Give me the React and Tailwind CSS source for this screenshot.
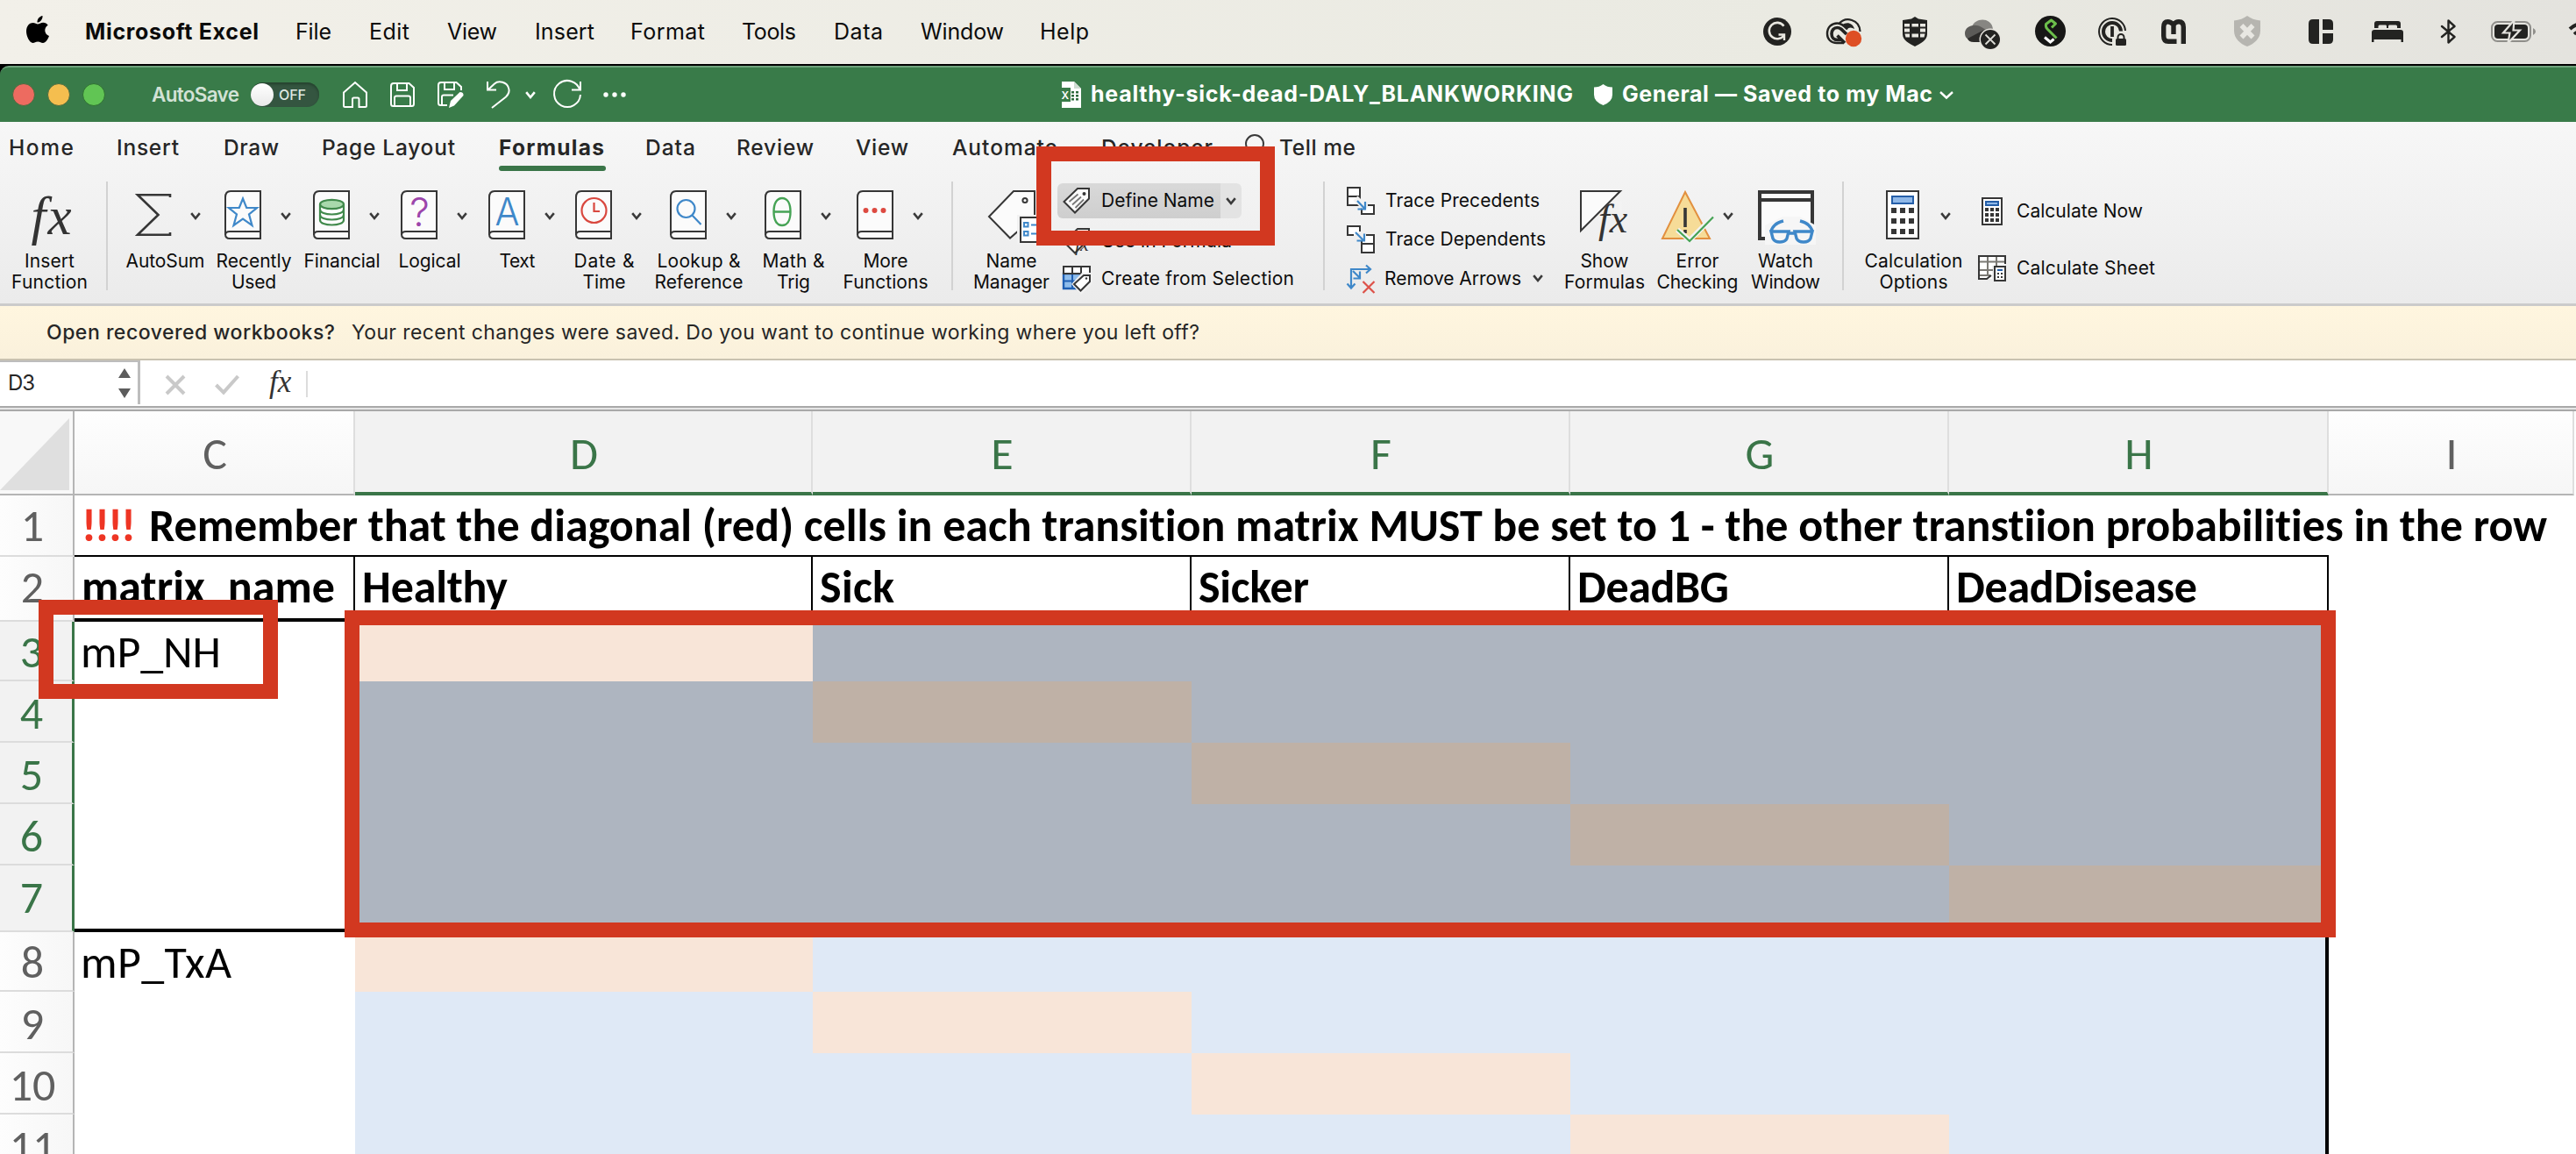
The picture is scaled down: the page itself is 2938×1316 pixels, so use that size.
import { useLayoutEffect, useRef } from "react";

const UI = "font-['Inter',sans-serif]";
const SHEET = "font-['Carlito','Lato',sans-serif]";

/* One line of text whose tracking is set so that it fills `w` pixels. */
function Label({ w, className = "", children }) {
  const ref = useRef(null);
  useLayoutEffect(() => {
    const el = ref.current;
    el.style.letterSpacing = "0px";
    const natural = el.getBoundingClientRect().width;
    const count = el.textContent.length;
    if (count > 1) el.style.letterSpacing = `${(w - natural) / (count - 1)}px`;
  }, [w, children]);
  return (
    <span className={`block shrink-0 ${className}`} style={{ width: w }}>
      <span ref={ref} className="inline-block whitespace-nowrap">
        {children}
      </span>
    </span>
  );
}

function Svg({ w, h, className = "", children }) {
  return (
    <svg
      width={w}
      height={h}
      viewBox={`0 0 ${w} ${h}`}
      fill="none"
      className={`block shrink-0 overflow-visible ${className}`}
    >
      {children}
    </svg>
  );
}

function Chevron({ className = "", color = "#3a3a3a" }) {
  return (
    <Svg w={12} h={9} className={className}>
      <path d="M1.2 1.2 6 7 10.8 1.2" stroke={color} strokeWidth="2.6" />
    </Svg>
  );
}

/* ---------- menu bar ---------- */

const menus = [
  ["File", 41, "ml-[42px]"],
  ["Edit", 46, "ml-[43px]"],
  ["View", 57, "ml-[43px]"],
  ["Insert", 68, "ml-[43px]"],
  ["Format", 85, "ml-[41px]"],
  ["Tools", 62, "ml-[42px]"],
  ["Data", 56, "ml-[43px]"],
  ["Window", 95, "ml-[43px]"],
  ["Help", 56, "ml-[41px]"],
];

function StatusIcons() {
  const k = "#232321";
  return (
    <>
      <Svg w={32} h={32} className="ml-[769px] mt-[20px]">
        <circle cx="16" cy="16" r="16" fill={k} />
        <path d="M23.500 9.700A9.200 9.200 0 1 0 24 19.600" stroke="#e9e8e1" strokeWidth="2.600" />
        <path d="M17.500 19.500H24V26" stroke="#e9e8e1" strokeWidth="2.400" />
      </Svg>
      <Svg w={40} h={32} className="ml-[40px] mt-[21px]">
        <path d="M14 6.500C22-3 38 1 38.500 15" stroke={k} strokeWidth="2.200" />
        <path d="M20 28H12C5 28 1 23.500 1 17.500 1 10 6 5.500 12.500 5.500 17 5.500 20 8 24 12.500" stroke={k} strokeWidth="2.400" />
        <path d="M21 28 12.500 19.500M17.500 24.500H12.500C8.500 24.500 6 21.500 6 17.500 6 13.500 8.500 10.500 12.500 10.500 15.500 10.500 17 12 23 18" stroke={k} strokeWidth="3.600" />
        <path d="M18 7.500C23 3.500 30 5 32 12 29 10 26 10 23.500 12Z" fill={k} />
        <circle cx="31" cy="23" r="9.200" fill="#de4f24" />
      </Svg>
      <Svg w={28} h={34} className="ml-[47px] mt-[19px]">
        <path d="M14 0 18 2.500 28 4V20C28 27 20 31 14 34 8 31 0 27 0 20V4L10 2.500Z" fill={k} />
        <g fill="#e9e8e1">
          <path d="M2 8H8V11.500H2ZM10.500 8H18V11.500H10.500ZM20 8H26V11.500H20ZM2 13.500H8V17.500H2ZM20 13.500H26V17.500H20ZM2.500 19.500H8V23.500H3.500ZM10.500 19.500H18V23.500H10.500ZM20 19.500H25.500L24.500 23.500H20Z" />
        </g>
      </Svg>
      <Svg w={40} h={34} className="ml-[43px] mt-[22px]">
        <path d="M8 9C11-2 30-3 32 11L22 17Z" fill="#878682" />
        <path d="M0 16C0 8 11 4 19 9L24 12 4 23C1 21 0 19 0 16Z" fill="#5c5b58" />
        <path d="M3 22 22 12 30 15V26H10C6 26 4 24.500 3 22Z" fill="#2c2b29" />
        <circle cx="29" cy="23" r="12.500" fill="#e8e6e0" />
        <circle cx="29" cy="23" r="11" fill={k} />
        <path d="M23.500 17.500 34.500 28.500M34.500 17.500 23.500 28.500" stroke="#dddcd7" strokeWidth="1.800" />
      </Svg>
      <Svg w={35} h={35} className="ml-[40px] mt-[18px]">
        <circle cx="17.500" cy="17.500" r="17.500" fill="#171716" />
        <path d="M19 13.500 23.500 9 18.500 5 12.500 9.500C12 12 12.500 13.500 14 15L24.500 25.500" stroke="#6cbf4b" strokeWidth="3" strokeLinejoin="round" />
        <path d="M11 24.500 17.500 30 21.500 26.500" stroke="#fff" strokeWidth="3" />
      </Svg>
      <Svg w={32} h={32} className="ml-[37px] mt-[20px]">
        <path d="M16 31A15 15 0 1 1 31 15" stroke={k} strokeWidth="2" />
        <path d="M16 26A10 10 0 1 1 26 15.500" stroke={k} strokeWidth="4" />
        <path d="M16 10V22" stroke={k} strokeWidth="3.800" />
        <rect x="20" y="24" width="12" height="8" rx="1.500" fill={k} />
        <path d="M22.500 25V22.500A3.500 3.500 0 0 1 29.500 22.500V25" stroke={k} strokeWidth="2" />
      </Svg>
      <Svg w={28} h={28} className="ml-[40px] mt-[22px]">
        <path d="M17.500 25.300H8Q2.700 25.300 2.700 19V9Q2.700 2.700 7.500 2.700 10.500 2.700 14 6 16.500 2.700 20 2.700 25.300 2.700 25.300 9V28M14 5V17" stroke={k} strokeWidth="5.400" />
        <path d="M8 17V9M19.500 17V9" stroke={k} strokeWidth="0" />
      </Svg>
      <Svg w={30} h={35} className="ml-[55px] mt-[18px]">
        <path d="M15 0C19 3 24 5 30 5.500V17C30 26 23 32 15 35 7 32 0 26 0 17V5.500C6 5 11 3 15 0Z" fill="#b6b5b0" />
        <path d="M8.500 11 21.500 24.500M21.500 11 8.500 24.500" stroke="#e8e7e2" strokeWidth="5.500" />
      </Svg>
      <Svg w={28} h={28} className="ml-[55px] mt-[22px]">
        <path d="M5 0H12V28H5Q0 28 0 23V5Q0 0 5 0ZM16 0H23Q28 0 28 5V12H16ZM16 16H28V23Q28 28 23 28H16Z" fill={k} />
      </Svg>
      <Svg w={36} h={24} className="ml-[44px] mt-[24px]">
        <path d="M3 8V3Q3 0 6 0H30Q33 0 33 3V8H29V6Q29 4.500 27.500 4.500H20Q19 4.500 19 6V8H17V6Q17 4.500 16 4.500H9Q7.500 4.500 7.500 6V8ZM0 24V13Q0 10 3 10H33Q36 10 36 13V24H33.500V21H2.500V24Z" fill={k} />
      </Svg>
      <Svg w={17} h={28} className="ml-[43px] mt-[22px]">
        <path d="M1 8 15.500 20 8.500 26.500V1.500L15.500 8 1 20" stroke={k} strokeWidth="2.400" strokeLinejoin="round" strokeLinecap="round" />
      </Svg>
      <Svg w={51} h={24} className="ml-[40px] mt-[24px]">
        <rect x="1" y="1" width="44" height="22" rx="6.500" stroke="#8f8e8a" strokeWidth="2" />
        <path d="M48 8Q51 9.500 51 12 51 14.500 48 16Z" fill="#8f8e8a" />
        <rect x="4" y="4" width="38" height="16" rx="4" fill={k} />
        <path d="M26.500-1 14 13.500H21.500L19.500 25 33 10.500H25.500Z" fill={k} stroke="#e5e4df" strokeWidth="2.200" />
      </Svg>
      <Svg w={8} h={24} className="ml-[38px] mt-[26px]">
        <path d="M1 7Q6 2 14 1" stroke={k} strokeWidth="4" />
        <path d="M6 13Q9 10 14 9" stroke={k} strokeWidth="3.500" />
      </Svg>
    </>
  );
}

function MenuBar() {
  return (
    <div className={`flex h-[73px] shrink-0 items-start overflow-hidden bg-gradient-to-r from-[#f2f0e9] via-[#eaeae2] via-70% to-[#e4e3de] ${UI} text-[25px] leading-[72px] text-[#0b0b0b]`}>
      <Svg w={26} h={31} className="ml-[30px] mt-[18px]">
        <path d="M18.500 0C19 4 15.500 7.800 12.500 7.600 12.200 3.800 15 .6 18.500 0ZM13 9.500C14.500 9.500 16.500 7.700 19.300 7.700 21.500 7.800 23.500 8.900 24.700 10.800 19.500 14 20.500 21 26 23 24.500 27 22 31 19 31 16.500 31 16 29.600 13.200 29.600 10.400 29.600 9.700 31 7.300 31 4 31-.2 23.500 0 17.300.2 11 4 7.900 7.600 7.900 9.900 7.900 11.700 9.500 13 9.500Z" fill="#000" />
      </Svg>
      <Label w={198} className="ml-[41px] font-bold">Microsoft Excel</Label>
      {menus.map(([name, w, gap]) => (
        <Label key={name} w={w} className={gap}>{name}</Label>
      ))}
      <StatusIcons />
    </div>
  );
}

/* ---------- title bar ---------- */

function TitleBar() {
  return (
    <div className="h-[66px] shrink-0 bg-black pt-[2px]">
      <div className={`flex h-[64px] items-center rounded-tl-[10px] border-t-2 border-[#6fa27c] bg-[#397b49] ${UI} text-white`}>
        <span className="ml-[14px] size-[26px] shrink-0 rounded-full border border-[#4c6a3f] bg-[#ed6b60]" />
        <span className="ml-[14px] size-[26px] shrink-0 rounded-full border border-[#4c6a3f] bg-[#f5be4f]" />
        <span className="ml-[14px] size-[26px] shrink-0 rounded-full border border-[#2f7032] bg-[#61c554]" />
        <Label w={100} className="ml-[53px] text-[22.500px] font-semibold text-[#d3e2d6]">AutoSave</Label>
        <div className="ml-[13px] flex h-[28px] w-[78px] shrink-0 items-center rounded-full bg-[#345540] shadow-[inset_0_2px_3px_#24422d]">
          <span className="h-[26px] w-[26px] rounded-full bg-gradient-to-b from-white to-[#e9e9e9]" />
          <Label w={31} className="ml-[6px] text-[16px] font-medium text-[#dfe8e1]">OFF</Label>
        </div>
        <Svg w={28} h={30} className="ml-[27px]">
          <path d="M1 12.500 14 1 27 12.500V27.500Q27 29 25.500 29H18.500V20Q18.500 18.500 17 18.500H12.500Q11 18.500 11 20V29H2.500Q1 29 1 27.500Z" stroke="#fff" strokeWidth="2" />
        </Svg>
        <Svg w={28} h={28} className="ml-[26px]">
          <path d="M4 1H21.500L27 6V24.500Q27 27 24.500 27H3.500Q1 27 1 24.500V4Q1 1 4 1ZM8 1V9H19V1M5 27V17.500Q5 15.500 7 15.500H21Q23 15.500 23 17.500V27" stroke="#fff" strokeWidth="2" />
        </Svg>
        <Svg w={30} h={30} className="ml-[26px]">
          <path d="M11 27H3.500Q1 27 1 24.500V4Q1 1 4 1H21.500L27 6V10M8 1V9H19V1M5 27V17.500Q5 15.500 7 15.500H18" stroke="#fff" strokeWidth="2" />
          <path d="M13 30 15 22 25.500 12Q30 12 29.500 16L19 27.500Z" fill="#fff" />
        </Svg>
        <Svg w={27} h={32} className="ml-[26px]">
          <path d="M1 1V10.500H11M2 10 9 3.500C14-1 23 2 25 8 26.500 12 25 15.500 22 18.500L6 31" stroke="#fff" strokeWidth="2" />
        </Svg>
        <Chevron color="#fff" className="ml-[17px]" />
        <Svg w={32} h={32} className="ml-[20px]">
          <path d="M30.500 11A15 15 0 1 0 31 16M31 1V10.500H21" stroke="#fff" strokeWidth="2" />
        </Svg>
        <Svg w={26} h={6} className="ml-[25px]">
          <path d="M3 .3A2.700 2.700 0 1 1 3 5.700 2.700 2.700 0 1 1 3 .3M13 .3A2.700 2.700 0 1 1 13 5.700 2.700 2.700 0 1 1 13 .3M23 .3A2.700 2.700 0 1 1 23 5.700 2.700 2.700 0 1 1 23 .3" fill="#fff" />
        </Svg>
        <Svg w={27} h={30} className="ml-[494px]">
          <path d="M3 0H17L25 8V30H3Z" fill="#fff" />
          <path d="M17 0V8H25Z" fill="#cfdcd2" />
          <path d="M14 11H17V13.500H14ZM19 11H22V13.500H19ZM14 15H17V17.500H14ZM19 15H22V17.500H19ZM14 19H17V21.500H14ZM19 19H22V21.500H19Z" fill="#2c6a3c" />
          <rect x="0" y="7" width="13" height="16" fill="#397b49" />
          <text x="2.500" y="19.500" fontSize="12" fontWeight="600" fill="#fff">X</text>
        </Svg>
        <Label w={550} className="ml-[9px] text-[25px] font-bold">healthy-sick-dead-DALY_BLANKWORKING</Label>
        <Svg w={21} h={24} className="ml-[24px]">
          <path d="M10.500 0Q15 3.500 21 3.500V12Q21 20 10.500 24 0 20 0 12V3.500Q6 3.500 10.500 0Z" fill="#fff" />
        </Svg>
        <Label w={354} className="ml-[11px] text-[25px] font-bold">General — Saved to my Mac</Label>
        <Svg w={16} h={9} className="ml-[8px]">
          <path d="M1 1 8 7.500 15 1" stroke="#fff" strokeWidth="2.400" />
        </Svg>
      </div>
    </div>
  );
}

/* ---------- ribbon ---------- */

const tabs = [
  ["Home", 74, "ml-[10px]"],
  ["Insert", 71, "ml-[49px]"],
  ["Draw", 63, "ml-[51px]"],
  ["Page Layout", 152, "ml-[49px]"],
  ["Formulas", 120, "ml-[50px]"],
  ["Data", 57, "ml-[47px]"],
  ["Review", 88, "ml-[47px]"],
  ["View", 60, "ml-[48px]"],
  ["Automate", 120, "ml-[50px]"],
  ["Developer", 127, "ml-[50px]"],
];

function Tabs() {
  return (
    <div className="flex h-[62px] text-[24.500px] font-medium leading-[59px] text-[#262626]">
      {tabs.map(([name, w, gap]) =>
        name === "Formulas" ? (
          <div key={name} className={`${gap} flex w-[120px] shrink-0 flex-col`}>
            <Label w={w} className="h-[50px] font-bold">{name}</Label>
            <span className="h-[6px] w-[122px] rounded-[3px] bg-[#3a7548]" />
          </div>
        ) : (
          <Label key={name} w={w} className={gap}>{name}</Label>
        )
      )}
      <Svg w={22} h={32} className="ml-[37px] mt-[14px]">
        <path d="M7 25V21C3 18 1 15 1 11A10 10 0 0 1 21 11C21 15 19 18 15 21V25ZM8 29H14" stroke="#3a3a3a" strokeWidth="2" />
      </Svg>
      <Label w={87} className="ml-[17px]">Tell me</Label>
    </div>
  );
}

function Book({ children }) {
  return (
    <Svg w={42} h={56}>
      <path d="M41 1H7Q1 1 1 8V50Q1 55 6 55H41Z" fill="#fbfbfb" stroke="#363636" strokeWidth="2" />
      <path d="M41 47H6Q1 47 1 51" stroke="#363636" strokeWidth="2" />
      {children}
    </Svg>
  );
}

function Fx({ className }) {
  return <span className={`block font-['Liberation_Serif',serif] italic leading-none text-[#333] ${className}`}>fx</span>;
}

function Tool({ className, iconClass = "w-[67px]", icon, chevron, chevronClass = "ml-[22px]", lines }) {
  return (
    <div className={`flex shrink-0 flex-col items-center pt-[16px] ${className}`}>
      <div className={`flex h-[57px] items-start ${iconClass}`}>
        {icon}
        {chevron && <Chevron className={`mt-[25px] ${chevronClass}`} />}
      </div>
      <div className="mt-[12px] flex flex-col items-center text-[21px] leading-[24px]">
        {lines.map(([text, w]) => (
          <Label key={text} w={w}>{text}</Label>
        ))}
      </div>
    </div>
  );
}

function Rule({ className }) {
  return <div className={`mt-[6px] h-[124px] w-[2px] shrink-0 bg-[#d2d2d2] ${className}`} />;
}

const blue = "#3f88c9";

const books = [
  {
    className: "w-[99px]",
    lines: [["Recently", 86], ["Used", 51]],
    art: <path d="M21 9.500 25.200 20H37L28 27.300 31.500 40 21 32.500 10.500 40 14 27.300 5 20H16.800Z" stroke={blue} strokeWidth="2.200" />,
  },
  {
    className: "w-[102px]",
    lines: [["Financial", 87]],
    art: (
      <g stroke="#418a4c" strokeWidth="2.200">
        <path d="M8 16V34C8 37.500 14 39.500 21.500 39.500 29 39.500 35 37.500 35 34V16" fill="#fff" />
        <path d="M8 22C8 25.500 14 27.500 21.500 27.500 29 27.500 35 25.500 35 22M8 28C8 31.500 14 33.500 21.500 33.500 29 33.500 35 31.500 35 28" />
        <ellipse cx="21.500" cy="16" rx="13.500" ry="5.200" fill="#a9d9ac" />
      </g>
    ),
  },
  {
    className: "w-[98px]",
    lines: [["Logical", 71]],
    art: <text x="21.500" y="41" textAnchor="middle" fontSize="45" fontWeight="300" fill="#9c45ab">?</text>,
  },
  {
    className: "w-[102px]",
    lines: [["Text", 41]],
    art: <text x="7.500" y="40" fontSize="43" fontWeight="300" textLength="28" lengthAdjust="spacingAndGlyphs" fill={blue}>A</text>,
  },
  {
    className: "w-[96px]",
    lines: [["Date &", 69], ["Time", 49]],
    art: <path d="M21.500 9A14 14 0 1 1 21.500 37 14 14 0 1 1 21.500 9M21.500 14V24H28" stroke="#d9483f" strokeWidth="2.200" />,
  },
  {
    className: "w-[120px]",
    lines: [["Lookup &", 95], ["Reference", 101]],
    art: <path d="M18.500 11A10 10 0 1 1 18.500 31 10 10 0 1 1 18.500 11M25.500 28.500 35.500 39" stroke={blue} strokeWidth="2.200" />,
  },
  {
    className: "w-[96px]",
    lines: [["Math &", 71], ["Trig", 38]],
    art: <path d="M20 9C26 9 29.500 15 29.500 24.500 29.500 34 26 40 20 40 14 40 10.500 34 10.500 24.500 10.500 15 14 9 20 9ZM11 24.500H29" stroke="#46a355" strokeWidth="2.400" />,
  },
  {
    className: "w-[114px]",
    lines: [["More", 51], ["Functions", 97]],
    art: <path d="M10.500 20A3 3 0 1 1 10.500 26 3 3 0 1 1 10.500 20M20.500 20A3 3 0 1 1 20.500 26 3 3 0 1 1 20.500 20M30.500 20A3 3 0 1 1 30.500 26 3 3 0 1 1 30.500 20" fill="#dd4a41" />,
  },
];

function TagIcon({ lines }) {
  return (
    <Svg w={32} h={32}>
      <path d="M17 2H30V13.500L14 29.500 1.500 17Z" fill="#fbfbfb" stroke="#363636" strokeWidth="2" />
      <circle cx="24.500" cy="8" r="2" fill="#363636" />
      {lines && <path d="M7.500 17 17.500 8.500M11 20.500 21 11.500M14.500 24 24 14.500" stroke="#777" strokeWidth="1.800" />}
    </Svg>
  );
}

function NameGroup() {
  return (
    <>
      <Tool
        className="ml-[20px] w-[93px]"
        iconClass="w-[54px]"
        lines={[["Name", 58], ["Manager", 87]]}
        icon={
          <Svg w={58} h={60}>
            <path d="M29 1H53V30L25 54.500 1 30Z" fill="#fbfbfb" stroke="#363636" strokeWidth="2" />
            <circle cx="42" cy="11.500" r="2.600" stroke="#363636" strokeWidth="2" />
            <path d="M33 28H60V62H33Z" fill="#f1f1f1" />
            <rect x="37" y="31" width="28" height="28" fill="#fff" stroke="#363636" strokeWidth="2" />
            <path d="M41 37H45.500V41.500H41ZM41 47H45.500V51.500H41ZM49 39.500H60M49 49.500H60" stroke={blue} strokeWidth="2" />
          </Svg>
        }
      />
      <div className="ml-[6px] flex w-[272px] shrink-0 flex-col pt-[6px] text-[21px] leading-[44px]">
        <div className="flex h-[44px] items-center">
          <div className="flex h-[40px] w-[186px] items-center rounded-l-[6px] bg-gradient-to-b from-[#d9d9d9] to-[#cecece] pl-[6px]">
            <TagIcon lines />
            <Label w={129} className="ml-[12px]">Define Name</Label>
          </div>
          <div className="flex h-[40px] w-[24px] items-center rounded-r-[6px] bg-[#e3e3e3] pl-[6px]">
            <Chevron />
          </div>
        </div>
        <div className="flex h-[44px] items-center pl-[6px] pt-[3px]">
          <div className="relative">
            <TagIcon />
            <Fx className="absolute left-[14px] top-[9px] text-[22px]" />
          </div>
          <Label w={149} className="ml-[12px]">Use in Formula</Label>
        </div>
        <div className="flex h-[45px] items-center pl-[6px]">
          <Svg w={32} h={30}>
            <path d="M1 9H21V26H1Z" fill="#8fbdec" stroke="#1f5fb3" strokeWidth="2.400" />
            <path d="M11 9V26M1 17.500H21" stroke="#1f5fb3" strokeWidth="2" />
            <path d="M1 1H31V9H1ZM11 1V9M21 1V9" fill="#fff" stroke="#363636" strokeWidth="2" />
            <path d="M10 21 22 8H34V20L21 33Z" fill="#f1f1f1" />
            <path d="M24 11H31V18L20.500 28.500 13 21Z" fill="#fff" stroke="#363636" strokeWidth="2" />
            <circle cx="27" cy="14.500" r="1.200" fill="#363636" />
          </Svg>
          <Label w={220} className="ml-[12px]">Create from Selection</Label>
        </div>
      </div>
    </>
  );
}

function AuditGroup() {
  return (
    <>
      <div className="ml-[25px] flex w-[226px] shrink-0 flex-col pt-[6px] text-[21px] leading-[44px]">
        <div className="flex h-[44px] items-center">
          <Svg w={32} h={32}>
            <path d="M1 1H15V11H1ZM1 11V21H15V11M17 22V31H31V21H24" fill="#fff" stroke="#363636" strokeWidth="2" />
            <path d="M10 13 22 25" stroke="#f2f2f2" strokeWidth="7" />
            <path d="M12 16 20.500 25M21 17V25.500H12.500" stroke={blue} strokeWidth="2.200" />
          </Svg>
          <Label w={176} className="ml-[12px]">Trace Precedents</Label>
        </div>
        <div className="flex h-[44px] items-center">
          <Svg w={32} h={32}>
            <path d="M8 11H1V1H15V7M22 11H31V21H17V17M17 21V31H31V21" fill="#fff" stroke="#363636" strokeWidth="2" />
            <path d="M10 8 19 17M20 9.500V17.500H11.500" stroke={blue} strokeWidth="2.200" />
          </Svg>
          <Label w={183} className="ml-[12px]">Trace Dependents</Label>
        </div>
        <div className="flex h-[45px] items-center">
          <Svg w={32} h={32}>
            <path d="M5 26V5H26M22 .5 27 5 22 9.500M.5 21.500 5 26.500 9.500 21.500M7 7 14.500 14.500M15 7.500V15.500H7.500" stroke={blue} strokeWidth="2.200" />
            <path d="M18.500 19 31.500 32M31.500 19 18.500 32" stroke="#dd5148" strokeWidth="2.200" />
          </Svg>
          <Label w={156} className="ml-[11px]">Remove Arrows</Label>
          <Chevron className="ml-[13px]" />
        </div>
      </div>
      <Tool
        className="ml-[20px] w-[96px]"
        iconClass="w-[56px] relative"
        lines={[["Show", 55], ["Formulas", 92]]}
        icon={
          <>
            <Svg w={56} h={60}>
              <path d="M1 1H46L1 46Z" fill="#fbfbfb" stroke="#363636" strokeWidth="2" />
              <path d="M22 35 30 22 40 14 46 14 46 26" stroke="#f3f3f3" strokeWidth="3" />
            </Svg>
            <Fx className="absolute left-[21px] top-[10px] text-[46px]" />
          </>
        }
      />
      <Tool
        className="w-[116px]"
        iconClass="w-[82px]"
        chevron
        chevronClass="ml-[10px]"
        lines={[["Error", 49], ["Checking", 93]]}
        icon={
          <Svg w={60} h={60}>
            <path d="M27 2 55 55H1Z" fill="#f6dc98" stroke="#e2903f" strokeWidth="2" />
            <path d="M27 20V42M27 45V49" stroke="#363636" strokeWidth="3.600" />
            <path d="M18 45 32 57 58 31" stroke="#f3f3f3" strokeWidth="6" />
            <path d="M18 45 32 58 59 30.500" stroke="#46a355" strokeWidth="2.200" />
          </Svg>
        }
      />
      <Tool
        className="w-[85px]"
        iconClass="w-[64px]"
        lines={[["Watch", 63], ["Window", 79]]}
        icon={
          <Svg w={64} h={60}>
            <path d="M2 2H62V55H2Z" fill="#fbfbfb" stroke="#363636" strokeWidth="4" />
            <path d="M2 11H62" stroke="#363636" strokeWidth="4" />
            <path d="M8 57V40L28 30H48L66 40V62H8Z" fill="#f6f6f6" />
            <path d="M15 47H35L33 55Q31 59 25 59 19 59 17 55ZM42 47H62L60 55Q58 59 52 59 46 59 44 55ZM35 49H42M15 47Q17 38 29 35M62 47Q60 38 48 35" stroke={blue} strokeWidth="3.400" />
          </Svg>
        }
      />
    </>
  );
}

function CalcGroup() {
  return (
    <>
      <Tool
        className="ml-[22px] w-[115px]"
        iconClass="w-[63px]"
        chevron
        chevronClass="ml-[24px]"
        lines={[["Calculation", 112], ["Options", 78]]}
        icon={
          <Svg w={38} h={56}>
            <rect x="1" y="1" width="36" height="54" fill="#fff" stroke="#363636" strokeWidth="2" />
            <rect x="7" y="7" width="24" height="8" fill="#8fb8e8" stroke="#245ea8" strokeWidth="2" />
            <path d="M6 20H12V26H6ZM16 20H22V26H16ZM26 20H32V26H26ZM6 32H12V38H6ZM16 32H22V38H16ZM26 32H32V38H26ZM6 44H12V50H6ZM16 44H22V50H16ZM26 44H32V50H26Z" fill="#363636" />
          </Svg>
        }
      />
      <div className="ml-[15px] flex shrink-0 flex-col pt-[8px] text-[21px] leading-[64px]">
        <div className="flex h-[64px] items-center">
          <Svg w={24} h={32} className="ml-[5px]">
            <rect x="1" y="1" width="22" height="30" fill="#fff" stroke="#363636" strokeWidth="2" />
            <rect x="5" y="5" width="14" height="4" fill="#8fb8e8" stroke="#245ea8" strokeWidth="2" />
            <path d="M4 12H8V16H4ZM10 12H14V16H10ZM16 12H20V16H16ZM4 18H8V22H4ZM10 18H14V22H10ZM16 18H20V22H16ZM4 24H8V28H4ZM10 24H14V28H10ZM16 24H20V28H16Z" fill="#363636" />
          </Svg>
          <Label w={144} className="ml-[16px]">Calculate Now</Label>
        </div>
        <div className="flex h-[66px] items-center">
          <Svg w={32} h={30} className="ml-px">
            <path d="M1 1H31V12H16V27H1Z" fill="#fff" />
            <path d="M1 7.500H31M1 17H17M11 1V23M21 1V12M1 23H14" stroke="#7b7974" strokeWidth="2" />
            <path d="M31 10V1H1V27H10L15 23" stroke="#363636" strokeWidth="2" />
            <rect x="19" y="13" width="12" height="16" fill="#fff" stroke="#363636" strokeWidth="2" />
            <path d="M22 17H28" stroke="#245ea8" strokeWidth="2" />
            <path d="M22 20H24V22H22ZM26 20H28V22H26ZM22 24H24V26H22ZM26 24H28V26H26Z" fill="#363636" />
          </Svg>
          <Label w={158} className="ml-[12px]">Calculate Sheet</Label>
        </div>
      </div>
    </>
  );
}

function Ribbon() {
  return (
    <div className={`flex h-[210px] shrink-0 flex-col border-b-[3px] border-[#cbcbcb] bg-gradient-to-b from-[#f7f7f7] to-[#ebebeb] ${UI} text-[#0d0d0d]`}>
      <Tabs />
      <div className="flex h-[145px] items-start">
        <Tool className="w-[113px]" iconClass="w-[42px]" lines={[["Insert", 57], ["Function", 87]]} icon={<Fx className="-mt-[1px] text-[61px] tracking-[2px]" />} />
        <Rule className="ml-[8px] mr-[14px]" />
        <Tool
          className="w-[103px]"
          iconClass="w-[69px]"
          chevron
          lines={[["AutoSum", 90]]}
          icon={
            <Svg w={41} h={56}>
              <path d="M40 8V5.300H3L26.500 28 3 50.700H40V48" stroke="#363636" strokeWidth="2.600" />
            </Svg>
          }
        />
        {books.map((b) => (
          <Tool key={b.lines[0][0]} className={b.className} chevron lines={b.lines} icon={<Book>{b.art}</Book>} />
        ))}
        <Rule className="ml-[18px]" />
        <NameGroup />
        <Rule className="ml-[31px]" />
        <AuditGroup />
        <Rule className="ml-[22px]" />
        <CalcGroup />
      </div>
    </div>
  );
}

/* ---------- message and formula bars ---------- */

function MessageBar() {
  return (
    <div className={`flex h-[62px] shrink-0 items-center border-b-2 border-[#c9c2b0] bg-gradient-to-b from-[#fff6df] to-[#faf1dc] ${UI} text-[23px] text-[#262626]`}>
      <Label w={329} className="ml-[53px] font-medium">Open recovered workbooks?</Label>
      <Label w={967} className="ml-[19px]">
        Your recent changes were saved. Do you want to continue working where you left off?
      </Label>
    </div>
  );
}

function FormulaBar() {
  return (
    <div className="flex h-[58px] shrink-0 flex-col bg-white">
      <div className="flex h-[52px] items-start">
        <div className={`flex h-[50px] w-[160px] shrink-0 items-center border-r-[3px] border-t-2 border-[#bdbdbd] ${UI} text-[24px] text-[#262626]`}>
          <Label w={31} className="ml-[9px]">D3</Label>
          <Svg w={14} h={34} className="ml-[95px]">
            <path d="M7 0 14 11H0ZM7 34 0 23H14Z" fill="#5c5c5c" />
          </Svg>
        </div>
        <Svg w={24} h={22} className="ml-[28px] mt-[17px]">
          <path d="M2 1 22 21M22 1 2 21" stroke="#c9c9c9" strokeWidth="4" />
        </Svg>
        <Svg w={28} h={22} className="ml-[33px] mt-[17px]">
          <path d="M1.500 11 10 19.500 26.500 1" stroke="#c9c9c9" strokeWidth="4" />
        </Svg>
        <Fx className="ml-[34px] mt-[7px] w-[31px] text-[35px]" />
        <span className="ml-[11px] mt-[12px] h-[30px] w-[2px] bg-[#dcdcdc]" />
      </div>
      <div className="h-[6px] border-y-2 border-[#a9a9a9] bg-[#e6e6e6]" />
    </div>
  );
}

/* ---------- worksheet ---------- */

const GRID = "grid shrink-0 grid-rows-[100%] grid-cols-[85px_320px_522px_432px_432px_432px_433px_280px]";

const columns = [
  ["C", false],
  ["D", true],
  ["E", true],
  ["F", true],
  ["G", true],
  ["H", true],
  ["I", false],
];

function ColumnHeader() {
  return (
    <div className={`${GRID} h-[96px] text-[52px] leading-[97px]`}>
      <div className="flex items-end justify-end border-b-2 border-r-2 border-[#b5b5b5] bg-[#f8f8f8] pb-[4px] pr-[4px]">
        <Svg w={79} h={82}>
          <path d="M79 0V82H0Z" fill="#dfdfdf" />
        </Svg>
      </div>
      {columns.map(([name, on]) =>
        on ? (
          <div key={name} className="overflow-hidden border-b-4 border-r-2 border-b-[#3a7548] border-r-[#dedede] bg-[#f2f2f2] pl-[2px] text-center text-[#3a7548]">
            {name}
          </div>
        ) : (
          <div key={name} className="overflow-hidden border-b-2 border-r-2 border-b-[#b5b5b5] border-r-[#dedede] bg-gradient-to-b from-[#fefefe] to-[#f6f6f6] pl-[2px] text-center text-[#606060]">
            {name}
          </div>
        )
      )}
    </div>
  );
}

function RowHead({ n, on, className = "" }) {
  return on ? (
    <div className={`border-b-2 border-r-[3px] border-b-[#dcdcdc] border-r-[#3a7548] bg-[#f2f2f2] pr-[10px] text-center text-[#3a7548] ${className}`}>{n}</div>
  ) : (
    <div className={`border-b-2 border-r-2 border-b-[#dcdcdc] border-r-[#b5b5b5] bg-gradient-to-r from-[#fdfdfd] to-[#f7f7f7] pr-[9px] text-center text-[#606060] ${className}`}>{n}</div>
  );
}

const headings = [
  ["Healthy", 166, "pl-[8px]"],
  ["Sick", 85, "pl-[8px]"],
  ["Sicker", 126, "pl-[8px]"],
  ["DeadBG", 173, "pl-[8px]"],
  ["DeadDisease", 275, "pl-[8px]"],
];

/* Row number, index of the diagonal cell, row height, name of the matrix. */
const rows = [
  [3, 0, "h-[68px] leading-[68px]", "mP_NH", 160],
  [4, 1, "h-[70px] leading-[72px]"],
  [5, 2, "h-[70px] leading-[72px]"],
  [6, 3, "h-[70px] leading-[72px]"],
  [7, 4, "h-[76px] leading-[72px]"],
  [8, 0, "h-[68px] leading-[68px]", "mP_TxA", 172],
  [9, 1, "h-[70px] leading-[72px]"],
  [10, 2, "h-[70px] leading-[72px]"],
  [11, 3, "h-[70px] leading-[72px]"],
];

function cellColor(n, diagonal) {
  if (n >= 8) return diagonal ? "bg-[#f8e5d8]" : "bg-[#dfe9f6]";
  if (!diagonal) return "bg-[#aeb5c0]";
  return n === 3 ? "bg-[#f8e5d8]" : "bg-[#bfb1a6]";
}

function Sheet() {
  return (
    <div className={`flex flex-1 flex-col overflow-hidden bg-white ${SHEET} text-[52px] text-black`}>
      <ColumnHeader />
      <div className={`${GRID} h-[70px] leading-[69px]`}>
        <RowHead n={1} />
        <div className="col-span-6 flex border-b-2 border-black pl-[8px] font-bold">
          <Label w={62} className="text-[#ee3524]">!!!!</Label>
          <Label w={2734} className="ml-[15px]">
            Remember that the diagonal (red) cells in each transition matrix MUST be set to 1 - the other transtiion probabilities in the row
          </Label>
        </div>
      </div>
      <div className={`${GRID} h-[74px] font-bold leading-[68px]`}>
        <RowHead n={2} className="font-normal" />
        <div className="border-b-4 border-r-2 border-black pl-[8px]">
          <Label w={289}>matrix_name</Label>
        </div>
        {headings.map(([name, w, pad]) => (
          <div key={name} className={`border-b-4 border-r-2 border-black ${pad}`}>
            <Label w={w}>{name}</Label>
          </div>
        ))}
      </div>
      {rows.map(([n, diag, height, name, w]) => (
        <div key={n} className={`${GRID} ${height}`}>
          <RowHead n={n} on={n < 8} />
          <div className={n === 7 ? "border-b-4 border-black" : "pl-[7px]"}>{name && <Label w={w}>{name}</Label>}</div>
          {[0, 1, 2, 3, 4].map((i) => (
            <div key={i} className={`${cellColor(n, i === diag)} ${i === 4 ? "border-r-4 border-black" : ""}`} />
          ))}
        </div>
      ))}
    </div>
  );
}

export default function App() {
  return (
    <div className="relative flex h-[1316px] w-[2938px] flex-col overflow-hidden bg-white">
      <MenuBar />
      <TitleBar />
      <Ribbon />
      <MessageBar />
      <FormulaBar />
      <Sheet />
      <div className="absolute left-[1182px] top-[167px] h-[113px] w-[272px] border-[17px] border-[#d23820]" />
      <div className="absolute left-[44px] top-[684px] h-[113px] w-[273px] border-[17px] border-[#d23820]" />
      <div className="absolute left-[393px] top-[696px] h-[373px] w-[2271px] border-[17px] border-[#d23820]" />
    </div>
  );
}
